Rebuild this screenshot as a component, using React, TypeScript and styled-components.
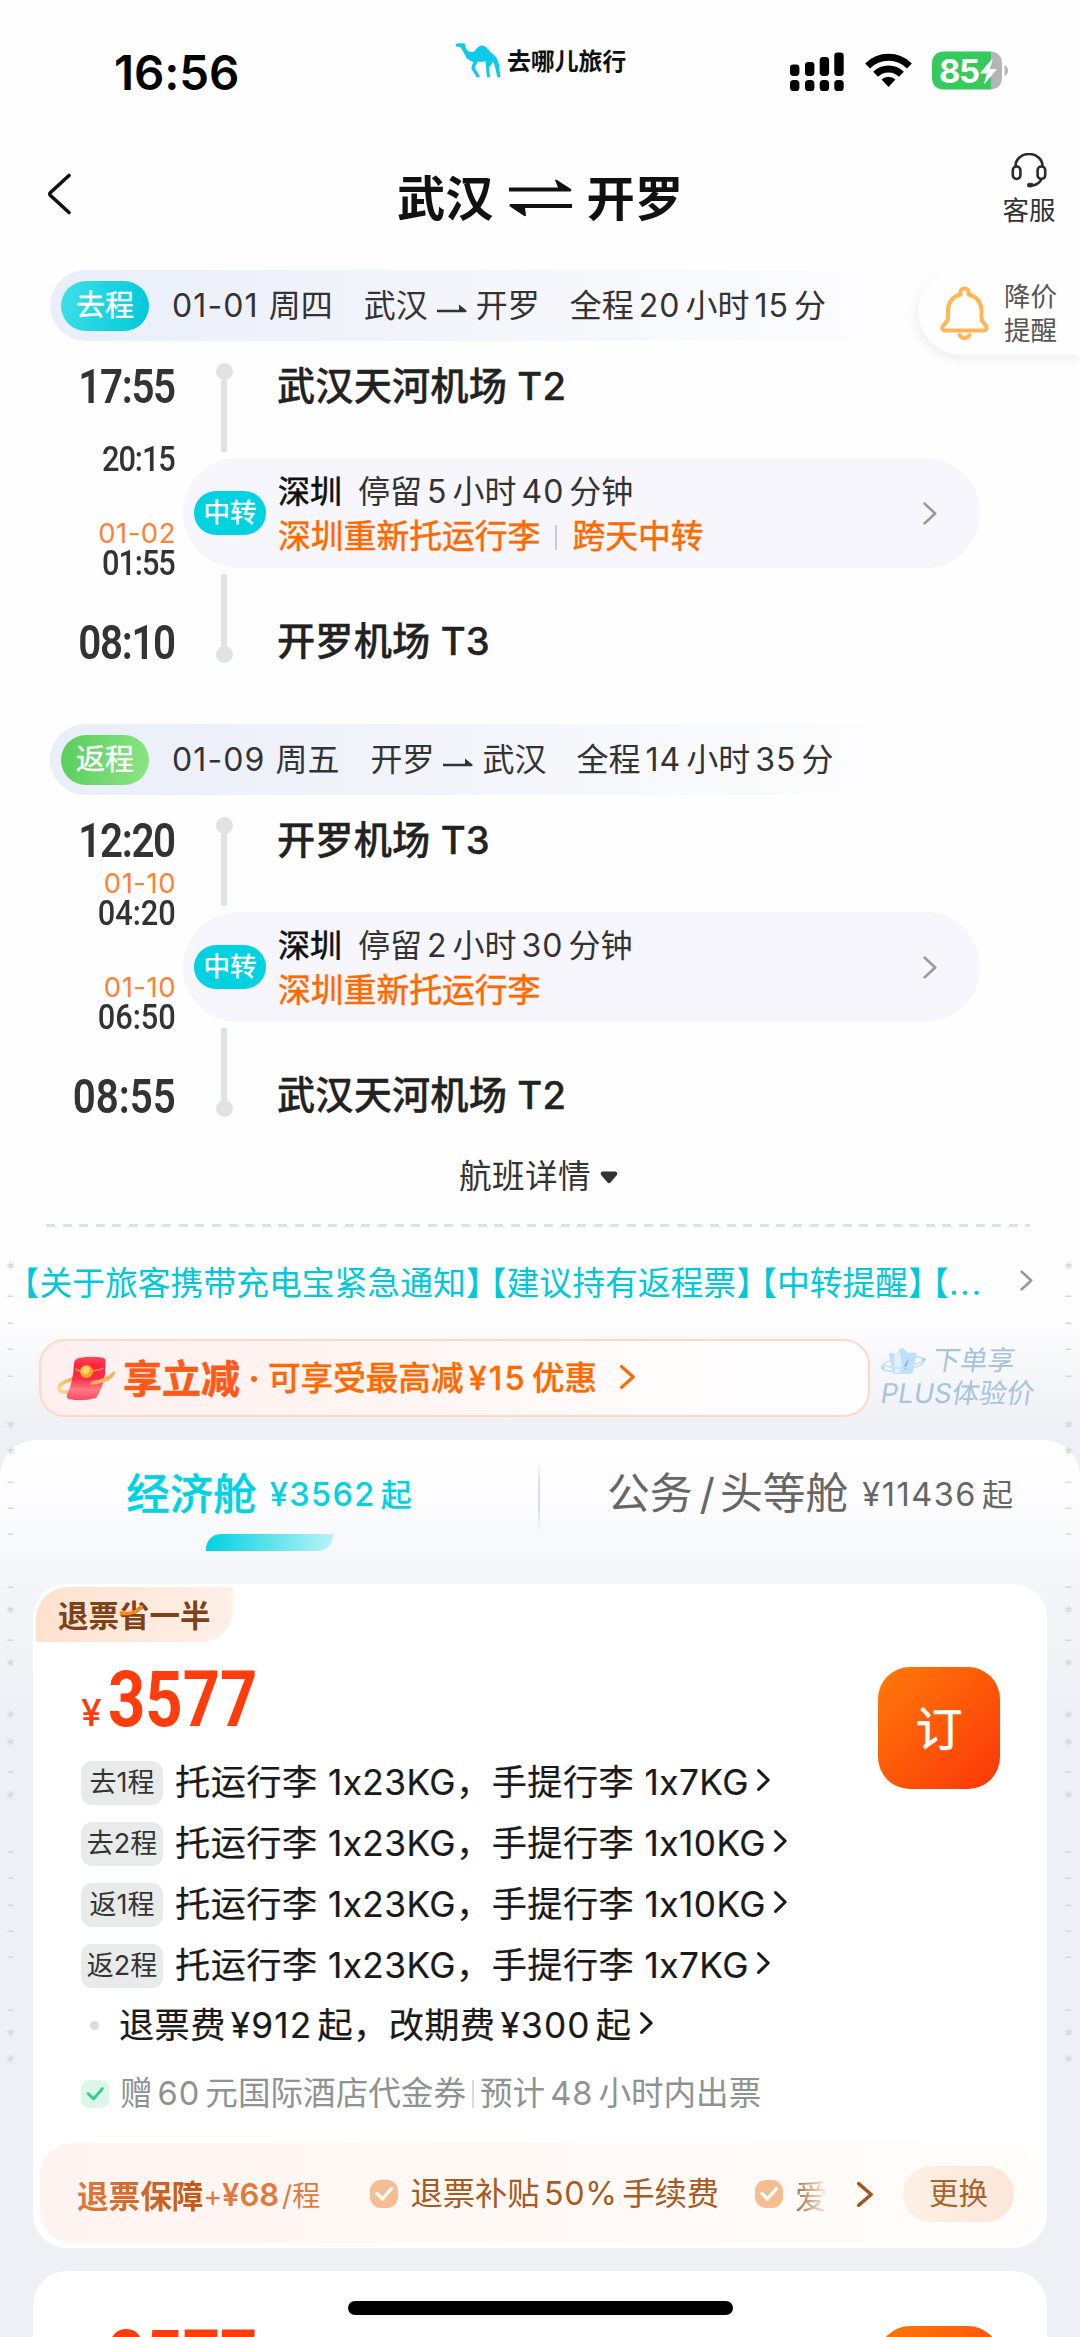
import React from "react";
import styled, { createGlobalStyle, css } from "styled-components";

const Global = createGlobalStyle`
  html, body { margin: 0; padding: 0; background: #eff0f5; }
  *, *::before, *::after { box-sizing: border-box; }
  body { width: 1080px; height: 2337px; overflow: hidden; text-autospace: no-autospace; }
`;

const sans = `Inter, "Noto Sans CJK SC", sans-serif`;
const din = `Roboto, "Noto Sans CJK SC", sans-serif`;

const Screen = styled.div`
  position: relative;
  width: 1080px;
  height: 2337px;
  overflow: hidden;
  font-family: ${sans};
  color: #222;
  white-space: nowrap;
  background: linear-gradient(#fefefe 0, #fefefe 1310px, #eff0f5 1430px, #eff0f5 100%);
`;

interface TextProps {
  $size: number;
  $color?: string;
  $weight?: number;
  $ls?: number;
  $stroke?: number;
  $ml?: number;
}
const Text = styled.span<TextProps>`
  font-size: ${(p) => p.$size}px;
  line-height: 1.2;
  color: ${(p) => p.$color ?? "inherit"};
  font-weight: ${(p) => p.$weight ?? 400};
  letter-spacing: ${(p) => p.$ls ?? 0}px;
  margin-left: ${(p) => p.$ml ?? 0}px;
  ${(p) => p.$stroke && css`-webkit-text-stroke: ${p.$stroke}px currentColor;`}
`;
const Digits = styled.span<{ $gap: number; $ls: number; $size?: number }>`
  margin: 0 ${(p) => p.$gap}px;
  letter-spacing: ${(p) => p.$ls}px;
  ${(p) => p.$size && css`font-size: ${p.$size}px;`}
`;
function Mixed({ text, gap = 5, ls = 1, size }: { text: string; gap?: number; ls?: number; size?: number }) {
  return (
    <>
      {text.split(/([0-9¥%]+)/).map((part, i) =>
        i % 2 ? (
          <Digits key={i} $gap={gap} $ls={ls} $size={size}>
            {part}
          </Digits>
        ) : (
          part
        )
      )}
    </>
  );
}

const Chevron = ({ w, h, color, sw = 2.6 }: { w: number; h: number; color: string; sw?: number }) => (
  <svg width={w} height={h} viewBox={`0 0 ${w} ${h}`} fill="none">
    <path d={`M1.6 1.6 L${w - 1.8} ${h / 2} L1.6 ${h - 1.6}`} stroke={color} strokeWidth={sw} strokeLinecap="round" strokeLinejoin="round" />
  </svg>
);

/* status bar */
const StatusBar = styled.div`
  height: 130px;
  display: grid;
  grid-template-columns: 456px 334px 1fr;
  align-items: start;
`;
const Clock = styled.div`
  padding: 45px 0 0 114px;
  font-size: 47.5px;
  line-height: 56px;
  font-weight: 600;
  color: #000;
  letter-spacing: -0.1px;
`;
const Brand = styled.div`
  padding-top: 43px;
  display: flex;
  height: 80px;
  align-items: flex-start;
  gap: 6px;
  font-size: 24px;
  font-weight: 700;
  line-height: 38px;
  color: #111;
  letter-spacing: -0.2px;
`;
const StatusIcons = styled.div`
  display: flex;
  padding-top: 51px;
  gap: 20px;
`;

/* title bar */
const TitleBar = styled.header`
  height: 140px;
  display: grid;
  grid-template-columns: 397px 1fr 104px;
`;
const Back = styled.div`
  padding: 43px 0 0 46px;
`;
const Route = styled.h1`
  margin: 0;
  height: 129px;
  display: flex;
  align-items: center;
  gap: 15px;
  font-size: 48.3px;
  font-weight: 700;
  color: #111;
  svg { margin-top: 6px; }
`;
const Service = styled.div`
  display: flex;
  flex-direction: column;
  align-items: center;
  padding: 23px 0 0 2px;
  width: 104px;
  gap: 6px;
`;

/* itinerary */
const Leg = styled.section`
  margin-bottom: 38px;
`;
const LegHead = styled.div`
  margin-left: 50px;
  width: 900px;
  height: 71px;
  padding: 2px 0 0 11px;
  border-radius: 36px;
  display: flex;
  align-items: center;
  background: linear-gradient(90deg, #e9eef9 0%, #f4f5fb 45%, #fefefe 100%);
`;
const DirTag = styled.div<{ $back?: boolean }>`
  width: 88px;
  height: 50px;
  border-radius: 25px;
  margin: -2px 23px 0 0;
  display: flex;
  align-items: center;
  justify-content: center;
  font-size: 29px;
  line-height: 48px;
  -webkit-text-stroke: 0.4px #fff;
  color: #fff;
  background: ${(p) =>
    p.$back ? "linear-gradient(100deg, #58cd5a, #8ce586)" : "linear-gradient(100deg, #3fdfe8, #00c8d8)"};
`;
const LegBody = styled.div`
  display: grid;
  grid-template-columns: 176px 797px;
  column-gap: 7px;
`;
const Times = styled.div`
  padding-top: 19px;
  display: flex;
  flex-direction: column;
  align-items: flex-end;
`;
const BigTime = styled.div<{ $ls: number }>`
  height: 54px;
  line-height: 54px;
  font-family: ${din};
  font-size: 48px;
  font-weight: 600;
  letter-spacing: ${(p) => p.$ls * 1.6}px;
  margin-right: ${(p) => p.$ls * -1.3}px;
  color: #333;
  transform: scaleX(0.84);
  transform-origin: right center;
`;
const SmallTimes = styled.div<{ $after: number }>`
  height: ${(p) => (p.$after === 44 ? 61 : 60)}px;
  margin-bottom: ${(p) => p.$after}px;
  display: flex;
  flex-direction: column;
  align-items: flex-end;
  justify-content: flex-end;
`;
const SmallTime = styled.div<{ $ls: number }>`
  height: 30px;
  line-height: 30px;
  font-family: ${din};
  font-size: 35px;
  font-weight: 500;
  letter-spacing: ${(p) => p.$ls * 1.2}px;
  margin-right: ${(p) => p.$ls * -1}px;
  color: #333;
  transform: scaleX(0.88);
  transform-origin: right center;
`;
const NextDate = styled.div`
  height: 30px;
  line-height: 28px;
  font-size: 27.5px;
  letter-spacing: 0.5px;
  color: #ff8235;
`;
const Stops = styled.div`
  display: flex;
  flex-direction: column;
`;
const Stop = styled.div`
  height: 117px;
  display: flex;
  &:last-child { height: 118px; }
`;
const Rail = styled.div<{ $end?: boolean }>`
  width: 82px;
  height: 89px;
  margin-top: ${(p) => (p.$end ? 6 : 22)}px;
  display: flex;
  flex-direction: ${(p) => (p.$end ? "column-reverse" : "column")};
  align-items: center;
  &::before { content: ""; width: 17px; height: 17px; border-radius: 50%; background: #dfe3e3; }
  &::after { content: ""; flex: 1; width: 6px; background: #dfe3e3; }
`;
const Airport = styled.div<{ $end?: boolean }>`
  margin-left: 12px;
  padding-top: ${(p) => (p.$end ? 48 : 20)}px;
  font-size: 38.2px;
  line-height: 50px;
  font-weight: 500;
  letter-spacing: 0.15px;
  color: #222;
  -webkit-text-stroke: 0.35px #222;
`;
const Transfer = styled.div`
  height: 110px;
  border-radius: 55px;
  background: #f6f6fc;
  display: flex;
  align-items: center;
  padding: 0 43px 0 11px;
`;
const TransferTag = styled.div`
  width: 72px;
  height: 44px;
  border-radius: 22px;
  background: #00d2e2;
  color: #fff;
  font-size: 26.5px;
  -webkit-text-stroke: 0.4px #fff;
  line-height: 43px;
  text-align: center;
`;
const TransferInfo = styled.div`
  flex: 1;
  margin-left: 12px;
  padding-top: 3px;
  display: flex;
  flex-direction: column;
`;
const TransferLine = styled.div`
  height: 45px;
  display: flex;
  align-items: center;
`;
const ThinRule = styled.i<{ $h: number; $mx: number; $c?: string }>`
  width: 2px;
  height: ${(p) => p.$h}px;
  margin: 0 ${(p) => p.$mx}px;
  background: ${(p) => p.$c ?? "#c9ccd2"};
`;
const DetailRow = styled.div`
  margin-top: -38px;
  height: 72px;
  display: flex;
  align-items: center;
  justify-content: center;
  gap: 9px;
  padding: 2px 3px 0 0;
`;
const Dashes = styled.div`
  margin: 12px 50px 0 46px;
  height: 3px;
  background: repeating-linear-gradient(90deg, #dfe2e2 0 9px, transparent 9px 16.6px);
`;
const Notice = styled.div`
  height: 110px;
  padding: 0 47px 3px 23px;
  display: flex;
  align-items: center;
  justify-content: space-between;
  color: #00c8d8;
  font-size: 32.8px;
`;
const NoticeItems = styled.div`
  display: flex;
  gap: 8px;
  font-feature-settings: "halt";
  text-spacing-trim: space-all;
`;

/* promotion strip */
const Promo = styled.div`
  height: 78px;
  margin: 2px 0 0 39px;
  display: flex;
`;
const PromoBox = styled.div`
  width: 831px;
  border: 2px solid #ffd8c8;
  border-radius: 26px;
  background: linear-gradient(90deg, #fff0ef 0%, #fff6f4 45%, #fffefe 85%);
  display: flex;
  align-items: center;
  padding: 2px 0 0 16px;
  color: #ff6a00;
`;
const PromoDot = styled.i`
  width: 6px;
  height: 6px;
  border-radius: 50%;
  background: #ff6a00;
  margin: 0 11px 0 11px;
`;
const Plus = styled.div`
  margin-left: 11px;
  display: flex;
  flex-direction: column;
  padding-top: 5px;
  color: #a8c4dc;
  font-size: 27.3px;
  line-height: 34px;
  letter-spacing: 0.1px;
`;
const PlusLine = styled.div`
  display: flex;
  align-items: center;
  height: 33px;
  gap: 6px;
`;
const Slant = styled.span`
  display: block;
  transform: skewX(-9deg);
`;

/* cabin tabs */
const Cabin = styled.main`
  margin-top: 23px;
  border-radius: 36px 36px 0 0;
  padding-top: 1px;
  background: linear-gradient(#fff 0, #fdfdfe 50px, #f4f5f9 150px, #eff0f5 300px);
`;
const Tabs = styled.div`
  height: 143px;
  display: grid;
  grid-template-columns: 538px 2px 540px;
`;
const Tab = styled.div<{ $active?: boolean }>`
  display: flex;
  flex-direction: column;
  align-items: ${(p) => (p.$active ? "center" : "flex-start")};
  padding-left: ${(p) => (p.$active ? 0 : 67)}px;
  color: ${(p) => (p.$active ? "#00d2e2" : "#666")};
`;
const TabLabel = styled.div`
  height: 93px;
  padding-top: 13px;
  display: flex;
  align-items: center;
`;
const TabSplit = styled.div`
  margin-top: 19px;
  height: 74px;
  background: linear-gradient(transparent, #dcdfe2 30%, #dcdfe2 70%, transparent);
`;
const Indicator = styled.div`
  width: 127px;
  height: 17px;
  border-radius: 15px 0 15px 0;
  background: linear-gradient(90deg, #00d2e2, #b9f3f6);
`;

/* fare card */
const Card = styled.article<{ $h: number }>`
  height: ${(p) => p.$h}px;
  margin: 0 33px 23px;
  border-radius: 34px;
  background: #fff;
  padding: 3px 7px 0;
  display: flex;
  flex-direction: column;
  & > * { flex-shrink: 0; }
`;
const Badge = styled.div`
  position: relative;
  margin-left: -4px;
  width: 197px;
  height: 55px;
  border-radius: 32px 0 32px 0;
  background: linear-gradient(90deg, #ffe1ce, #fff0e8);
  padding-left: 22px;
  font-size: 30.5px;
  line-height: 57px;
  font-weight: 700;
  color: #7c4218;
  svg { position: absolute; left: 83px; top: 18px; }
`;
const PriceRow = styled.div<{ $top: number }>`
  margin-top: ${(p) => p.$top}px;
  height: 85px;
  display: flex;
  align-items: flex-start;
  justify-content: space-between;
  padding: 0 40px 0 41px;
`;
const Price = styled.div`
  display: flex;
  align-items: baseline;
  color: #ff3c0c;
  padding-top: 2px;
`;
const PriceSign = styled.span`
  width: 27px;
  font-size: 37px;
  line-height: 44px;
  font-weight: 500;
`;
const PriceValue = styled.span`
  font-family: ${din};
  font-size: 78px;
  line-height: 62px;
  font-weight: 700;
  transform: scaleX(0.835);
  transform-origin: left center;
`;
const Book = styled.button`
  width: 122px;
  height: 122px;
  border: 0;
  border-radius: 32px;
  background: linear-gradient(135deg, #ff7a0a, #fc3608);
  color: #fff;
  font: 400 47px/119px ${sans};
  -webkit-text-stroke: 0.6px #fff;
  padding: 0;
  flex: none;
`;
const Row = styled.div<{ $h?: number }>`
  height: ${(p) => p.$h ?? 61}px;
  display: flex;
  align-items: center;
  padding-left: 41px;
  color: #1a1a1a;
`;
const LegNo = styled.span`
  width: 82px;
  height: 44px;
  margin-right: 12px;
  border-radius: 11px;
  background: #e9ebeb;
  color: #333;
  font-size: 27px;
  line-height: 43px;
  text-align: center;
`;
const Bullet = styled.i`
  width: 9px;
  height: 9px;
  border-radius: 50%;
  background: #dadddd;
  margin: 0 20px 0 9px;
`;
const Guard = styled.div`
  margin-top: 9px;
  height: 100px;
  border-radius: 32px;
  background: linear-gradient(90deg, #fff4f1 0%, #fff9f6 45%, #fffcfa 100%);
  display: flex;
  align-items: center;
  padding: 2px 0 0 37px;
  color: #a85a20;
`;
const GuardName = styled.span`
  font-size: 31.6px;
  font-weight: 700;
  background: linear-gradient(90deg, #e07a3c, #c4561a);
  -webkit-background-clip: text;
  color: transparent;
`;
const GuardPrice = styled.span`
  width: 167px;
  color: #e4783c;
  font-size: 28px;
  b { font-size: 31px; font-weight: 600; margin-right: 3px; }
`;
const Faded = styled.span`
  width: 34px;
  margin-right: 28px;
  font-size: 32.5px;
  background: linear-gradient(90deg, #a85a20 -10%, rgba(168, 90, 32, 0.1) 90%);
  -webkit-background-clip: text;
  color: transparent;
`;
const Swap = styled.div`
  margin-left: 30px;
  width: 111px;
  height: 56px;
  border-radius: 28px;
  background: linear-gradient(90deg, #fdf0e4, #fbe7d8);
  font-size: 29.5px;
  line-height: 55px;
  text-align: center;
  color: #a9642e;
`;

/* floating layers */
const Alert = styled.aside`
  position: absolute;
  right: 0;
  top: 267px;
  width: 162px;
  height: 88px;
  border-radius: 44px 0 0 44px;
  background: #fefefe;
  box-shadow: -2px 5px 10px rgba(0, 0, 0, 0.06);
  display: flex;
  align-items: center;
  padding: 3px 0 0 22px;
  gap: 15px;
  color: #555;
  font-size: 26.5px;
  line-height: 34px;
`;
const HomeBar = styled.div`
  position: absolute;
  left: 348px;
  top: 2301px;
  width: 385px;
  height: 14px;
  border-radius: 7px;
  background: #000;
`;
const Marks = styled.div<{ $right?: boolean }>`
  position: absolute;
  top: 1257px;
  ${(p) => (p.$right ? "right: 3px;" : "left: 2px;")}
  width: 17px;
  display: flex;
  flex-direction: column;
  text-align: center;
  color: #d5d8da;
  font-size: 18px;
`;
const Mark = styled.span`
  height: 26.45px;
  line-height: 26.45px;
`;

const Camel = () => (
  <svg width="45" height="36" viewBox="0 0 45 36" fill="#0ccbea">
    <path d="M0 1 Q1 0 9 0.500 Q8.500 3 11 7 Q13.500 9.500 17 9 Q19 8.500 21 5 Q23.500 2 26.500 2.500 Q30 3 32 6.500 Q34.500 9.500 38 12 Q43 17 43.300 25 L44.500 34 L41.500 34.500 L39 24 Q38 20 36.500 18.500 Q36.500 21 33 24.500 L34 34 L31 34.500 L30 24 L29.500 18 Q26 19.500 22 18.500 L18.500 24.500 L24 33.500 L21 34.500 L15.500 26 Q15 24.500 17.500 19 Q11 17 9.500 13 Q7 8 4.500 4 L0 3.500 Z" />
  </svg>
);
const Signal = () => (
  <svg width="55" height="40" viewBox="0 0 55 40">
    {[0, 15, 29.7, 44.3].map((x, i) => (
      <g key={x}>
        <rect x={x} y={[13.5, 11, 6, 1.5][i]} width="9.4" height={[11.5, 14, 19, 23.5][i]} rx="3.4" />
        <rect x={x} y="29" width="9.4" height="11" rx="3.6" />
      </g>
    ))}
  </svg>
);
const Wifi = () => (
  <svg width="47" height="38" viewBox="0 0 47 38" fill="none" stroke="#000" strokeWidth="7">
    <path d="M2.6 15 A29.6 29.6 0 0 1 44.4 15" />
    <path d="M10.6 23.2 A18.3 18.3 0 0 1 36.4 23.2" />
    <path d="M16.6 28.4 A10 10 0 0 1 30.4 28.4 L23.5 36 Z" fill="#000" stroke="none" />
  </svg>
);
const BatteryWrap = styled.div`
  position: relative;
  width: 77px;
  height: 39px;
  span { position: absolute; left: 7px; top: 1px; color: #fff; font-weight: 700; font-size: 33px; line-height: 38px; letter-spacing: -1.5px; }
  svg { position: absolute; left: 0; top: 0; }
`;
const Battery = () => (
  <BatteryWrap>
    <svg width="77" height="39" viewBox="0 0 77 39">
      <path d="M13 .5 H59 V38.500 H13 Q0 38.500 0 26 V13 Q0 .5 13 .5Z" fill="#36c95c" />
      <path d="M59 .5 Q70 1.500 70 13 V26 Q70 37.500 59 38.500Z" fill="#b5b5b5" />
      <path d="M72.500 14 Q76 16 76 19.500 Q76 23 72.500 25Z" fill="#b5b5b5" />
      <path d="M60 8.500 L48.500 22 H55.500 L52.500 32.500 L64 18.500 H57.500Z" fill="#fff" stroke="#fff" strokeWidth="1" strokeLinejoin="round" />
    </svg>
    <span>85</span>
  </BatteryWrap>
);
const SwapArrows = () => (
  <svg width="63" height="40" viewBox="0 0 63 40" fill="#111">
    <path d="M0 9.500 H49 L46 2 Q46 1 48 2 L62 11 Q63 13.500 61 13.500 H0Z" />
    <path d="M63 30 H16 L17 37.500 Q16.500 39 14.500 37.500 L1 28.500 Q-.5 26 2 26 H63Z" />
  </svg>
);
const LineArrow = () => (
  <svg width="30" height="12" viewBox="0 0 30 12" fill="#333">
    <path d="M0 6.800 H22 V1.500 L29.500 7.500 Q30 9 28.500 9.200 H0Z" />
  </svg>
);
const Headset = () => (
  <svg width="36" height="36" viewBox="0 0 36 36" fill="none" stroke="#2b2b2b" strokeWidth="2.600">
    <path d="M4.500 14 V13 A13.500 12 0 0 1 31.500 13 V14" />
    <rect x="1.800" y="13.500" width="7.600" height="12.500" rx="3.700" />
    <rect x="26.600" y="13.500" width="7.600" height="12.500" rx="3.700" />
    <path d="M30.500 26 Q28 31.500 21.500 32.500" />
    <rect x="16.500" y="30.300" width="5.500" height="3.600" rx="1.400" fill="#2b2b2b" stroke="#2b2b2b" strokeWidth="1" />
  </svg>
);
const Bell = () => (
  <svg width="49" height="54" viewBox="0 0 49 54" fill="none" stroke="#ffb656" strokeWidth="4" strokeLinejoin="round" strokeLinecap="round">
    <path d="M20.500 6.500 Q20.500 2.500 24.500 2.500 Q28.500 2.500 28.500 6.500 V8.500 Q41 12 41.500 24 V31 Q41.500 36 45 38.500 Q49 43.500 44 44.500 H5 Q0 43.500 4 38.500 Q8 36 8 31 V24 Q8.500 12 20.500 8.500Z" />
    <path d="M19.500 49 Q21 52 24.500 52 Q28 52 29.500 49" />
  </svg>
);
const Packet = () => (
  <svg width="60" height="46" viewBox="0 0 60 46" fill="none">
    <defs>
      <linearGradient id="pk" x1="0" y1="0" x2="0" y2="1">
        <stop offset="0" stopColor="#ff4a5a" />
        <stop offset=".2" stopColor="#ff2140" />
        <stop offset=".5" stopColor="#ff2c48" />
        <stop offset=".75" stopColor="#ff7a84" />
        <stop offset="1" stopColor="#f84a60" />
      </linearGradient>
      <linearGradient id="rg" x1="0" y1="1" x2="1" y2="0">
        <stop offset="0" stopColor="#ffd58c" />
        <stop offset="1" stopColor="#f2ad48" />
      </linearGradient>
    </defs>
    <path d="M16 23 Q2 27 2 32 Q2 37 11 36" stroke="url(#rg)" strokeWidth="3.500" strokeLinecap="round" />
    <path d="M22 2 Q33 0 45 1.500 Q49 2 48.500 6 L48 18 Q46 32 39 42 Q24 46 12 43 Q9 42 10 39 Q16 27 17 8 Q17 3 22 2Z" fill="url(#pk)" />
    <path d="M18 13 Q28 19 47 12" stroke="#ff8a50" strokeWidth="1.800" />
    <circle cx="29.500" cy="15.500" r="6.500" fill="#f9a52b" />
    <circle cx="28.500" cy="14" r="4" fill="#ffd666" />
    <path d="M35 26.500 Q50 24 57 16.500 Q55 25 35 27.500Z" fill="#f2b45c" stroke="#f2b45c" strokeWidth="2.400" strokeLinejoin="round" />
  </svg>
);
const Crown = () => (
  <svg width="46" height="30" viewBox="0 0 46 30" fill="none">
    <ellipse cx="22" cy="18" rx="21.500" ry="6.500" transform="rotate(-10 22 18)" stroke="#c3dff2" strokeWidth="1.600" />
    <path d="M8 9 Q8 6 11 7 L15 8 L19 3 Q21 1 23 3 L27 7 L33 6.500 Q36 6.500 35.500 9 L32 26 Q31.500 28 29 28 H14 Q12 28 11.500 26Z" fill="#bfe0f8" />
    <path d="M13 9 L19 6 L21 20 L18 27 H14Z" fill="#dff0fc" />
    <path d="M22 22 L28 12 L25 24Z" fill="#84b8e2" />
    <path d="M2 19 Q22 27 43 14" stroke="#c8e2f5" strokeWidth="1.600" />
    <circle cx="43" cy="13.500" r="1.800" fill="#a8d0ee" />
    <circle cx="2" cy="22" r="1.500" fill="#a8d0ee" />
  </svg>
);
const CheckBox = styled.svg.attrs({ width: 28, height: 28, viewBox: "0 0 28 28" })<{ $ml: number; $mr: number }>`
  flex: none;
  margin: 0 ${(p) => p.$mr}px 0 ${(p) => p.$ml}px;
`;
const Check = ({ bg, fg, ml = 0, mr = 12 }: { bg: string; fg: string; ml?: number; mr?: number }) => (
  <CheckBox $ml={ml} $mr={mr}>
    <rect width="28" height="28" rx={fg === "#fff" ? 11 : 8} fill={bg} />
    <path d="M7 13.500 L12.500 19 L21.500 8.500" stroke={fg} strokeWidth={fg === "#fff" ? 3.4 : 2.8} fill="none" strokeLinecap="round" strokeLinejoin="round" />
  </CheckBox>
);
const Caret = () => (
  <svg width="18" height="13" viewBox="0 0 18 13" fill="#333">
    <path d="M2.500 .5 H15.500 Q18.500 1.500 16.500 4.500 L10.500 11.500 Q9 13 7.500 11.500 L1.500 4.500 Q-.5 1.500 2.500 .5Z" />
  </svg>
);

interface LegData {
  back?: boolean;
  tag: string;
  date: string;
  day: string;
  from: string;
  to: string;
  total: string;
  times: [string, string | null, string, string, string, string];
  start: string;
  end: string;
  stay: string;
  warn: string[];
}
const legs: LegData[] = [
  {
    tag: "去程", date: "01-01", day: "周四", from: "武汉", to: "开罗", total: "全程20小时15分",
    times: ["17:55", null, "20:15", "01-02", "01:55", "08:10"],
    start: "武汉天河机场 T2", end: "开罗机场 T3", stay: "停留5小时40分钟", warn: ["深圳重新托运行李", "跨天中转"],
  },
  {
    back: true, tag: "返程", date: "01-09", day: "周五", from: "开罗", to: "武汉", total: "全程14小时35分",
    times: ["12:20", "01-10", "04:20", "01-10", "06:50", "08:55"],
    start: "开罗机场 T3", end: "武汉天河机场 T2", stay: "停留2小时30分钟", warn: ["深圳重新托运行李"],
  },
];
const LegRoute = styled.span`
  display: flex;
  align-items: center;
  gap: 9px;
  margin: 0 30px 0 31px;
  svg { margin-top: 5px; }
`;

/* a time with a narrow "1" is set tighter */
const tight = (time: string) => (time.includes("1") ? -1 : 0);

function LegView({ leg }: { leg: LegData }) {
  const t = leg.times;
  return (
    <Leg>
      <LegHead>
        <DirTag $back={leg.back}>{leg.tag}</DirTag>
        <Text $size={32} $color="#333" $ls={1.1}>{leg.date}</Text>
        <Text $size={32} $color="#333" $ml={10}>{leg.day}</Text>
        <LegRoute>
          <Text $size={32} $color="#333">{leg.from}</Text>
          <LineArrow />
          <Text $size={32} $color="#333">{leg.to}</Text>
        </LegRoute>
        <Text $size={32} $color="#333"><Mixed text={leg.total} /></Text>
      </LegHead>
      <LegBody>
        <Times>
          <BigTime $ls={tight(t[0])}>{t[0]}</BigTime>
          <SmallTimes $after={44}>
            {t[1] && <NextDate>{t[1]}</NextDate>}
            <SmallTime $ls={tight(t[2])}>{t[2]}</SmallTime>
          </SmallTimes>
          <SmallTimes $after={37}>
            <NextDate>{t[3]}</NextDate>
            <SmallTime $ls={tight(t[4])}>{t[4]}</SmallTime>
          </SmallTimes>
          <BigTime $ls={tight(t[5])}>{t[5]}</BigTime>
        </Times>
        <Stops>
          <Stop>
            <Rail />
            <Airport>{leg.start}</Airport>
          </Stop>
          <Transfer>
            <TransferTag>中转</TransferTag>
            <TransferInfo>
              <TransferLine>
                <Text $size={32} $color="#111" $stroke={0.6}>深圳</Text>
                <Text $size={32} $color="#333" $ml={16}><Mixed text={leg.stay} /></Text>
              </TransferLine>
              <TransferLine>
                {leg.warn.map((w, i) => (
                  <React.Fragment key={w}>
                    {i > 0 && <ThinRule $h={25} $mx={15} />}
                    <Text $size={32.8} $color="#ff6a00" $stroke={0.5}>{w}</Text>
                  </React.Fragment>
                ))}
              </TransferLine>
            </TransferInfo>
            <Chevron w={14} h={23} color="#999" />
          </Transfer>
          <Stop>
            <Rail $end />
            <Airport $end>{leg.end}</Airport>
          </Stop>
        </Stops>
      </LegBody>
    </Leg>
  );
}

const bags = [
  ["去1程", "1x7KG"],
  ["去2程", "1x10KG"],
  ["返1程", "1x10KG"],
  ["返2程", "1x7KG"],
];
const marks = "*---- **--- -*-* **-* ----- -**".split("");

export default function App() {
  return (
    <Screen>
      <Global />
      <StatusBar>
        <Clock>16:56</Clock>
        <Brand><Camel />去哪儿旅行</Brand>
        <StatusIcons><Signal /><Wifi /><Battery /></StatusIcons>
      </StatusBar>
      <TitleBar>
        <Back>
          <svg width="26" height="42" viewBox="0 0 26 42" fill="none">
            <path d="M23 2.500 L4.500 19.500 Q3 21 4.500 22.500 L23 39.500" stroke="#111" strokeWidth="3.600" strokeLinecap="round" />
          </svg>
        </Back>
        <Route>武汉<SwapArrows />开罗</Route>
        <Service>
          <Headset />
          <Text $size={26.5} $color="#333">客服</Text>
        </Service>
      </TitleBar>

      {legs.map((l) => <LegView key={l.tag} leg={l} />)}

      <DetailRow><Text $size={32.6} $ls={0.4} $color="#333">航班详情</Text><Caret /></DetailRow>
      <Dashes />
      <Notice>
        <NoticeItems>
          <span>【关于旅客携带充电宝紧急通知】</span>
          <span>【建议持有返程票】</span>
          <span>【中转提醒】</span>
          <span>【<Text $size={32.8} $ls={2}>...</Text></span>
        </NoticeItems>
        <Chevron w={13} h={21} color="#999" />
      </Notice>

      <Promo>
        <PromoBox>
          <Packet />
          <Text $size={39} $weight={700} $color="#ff5a1a" $ml={6} $stroke={0.6}>享立减</Text>
          <PromoDot />
          <Text $size={32.6} $weight={500} $stroke={0.3}><Mixed text="可享受最高减¥15优惠" ls={2.2} /></Text>
          <Text $size={20} $ml={23}><Chevron w={15} h={24} color="#ff6a00" sw={3.2} /></Text>
        </PromoBox>
        <Plus>
          <PlusLine><Crown /><Slant>下单享</Slant></PlusLine>
          <Slant>PLUS体验价</Slant>
        </Plus>
      </Promo>

      <Cabin>
        <Tabs>
          <Tab $active>
            <TabLabel>
              <Text $size={43.5} $weight={500} $stroke={0.3}>经济舱</Text>
              <Text $size={31} $weight={500} $ml={8}><Mixed text="¥3562起" size={32.5} ls={1.4} /></Text>
            </TabLabel>
            <Indicator />
          </Tab>
          <TabSplit />
          <Tab>
            <TabLabel>
              <Text $size={42.8}>公务</Text>
              <Text $size={42.6} $ml={7}>/</Text>
              <Text $size={42.8} $ml={5}>头等舱</Text>
              <Text $size={31} $ml={9}><Mixed text="¥11436起" size={32.5} ls={1.5} /></Text>
            </TabLabel>
          </Tab>
        </Tabs>

        <Card $h={664}>
          <Badge>
            退票省一半
            <svg width="25" height="12" viewBox="0 0 25 12"><path d="M1 6 Q14 9 23 0 Q25 2 23 4 Q14 12 1 10Z" fill="#ff8a1c" /></svg>
          </Badge>
          <PriceRow $top={25}>
            <Price><PriceSign>¥</PriceSign><PriceValue>3577</PriceValue></Price>
            <Book>订</Book>
          </PriceRow>
          {bags.map(([no, w]) => (
            <Row key={no}>
              <LegNo>{no}</LegNo>
              <Text $size={35.2} $ls={0.45} $stroke={0.2}>托运行李 1x23KG，手提行李 {w}</Text>
              <Text $size={20} $ml={8}><Chevron w={13} h={22} color="#1a1a1a" sw={3} /></Text>
            </Row>
          ))}
          <Row $h={58}>
            <Bullet />
            <Text $size={35.2} $ls={0.4} $stroke={0.2}><Mixed text="退票费¥912起，改期费¥300起" ls={1.2} /></Text>
            <Text $size={20} $ml={9}><Chevron w={13} h={22} color="#1a1a1a" sw={3} /></Text>
          </Row>
          <Row $h={80}>
            <Check bg="#dcf7ea" fg="#2fcf8e" mr={11} />
            <Text $size={32.6} $color="#8e9392"><Mixed text="赠60元国际酒店代金券" /></Text>
            <ThinRule $h={28} $mx={6} $c="#d8dcdc" />
            <Text $size={32.6} $color="#8e9392"><Mixed text="预计48小时内出票" /></Text>
          </Row>
          <Guard>
            <GuardName>退票保障</GuardName>
            <GuardPrice>+<b>¥68</b>/程</GuardPrice>
            <Check bg="#f6bd92" fg="#fff" />
            <Text $size={32.3}><Mixed text="退票补贴50%手续费" ls={0.6} gap={4.5} /></Text>
            <Check bg="#f6bd92" fg="#fff" ml={36} />
            <Faded>爱</Faded>
            <Chevron w={16} h={25} color="#a0561c" sw={3.4} />
            <Swap>更换</Swap>
          </Guard>
        </Card>

        <Card $h={300}>
          <PriceRow $top={52}>
            <Price><PriceSign>¥</PriceSign><PriceValue>3577</PriceValue></Price>
            <Book>订</Book>
          </PriceRow>
        </Card>
      </Cabin>

      <Alert><Bell /><div>降价<br />提醒</div></Alert>
      <Marks>{marks.map((m, i) => <Mark key={i}>{m}</Mark>)}</Marks>
      <Marks $right>{marks.map((m, i) => <Mark key={i}>{m}</Mark>)}</Marks>
      <HomeBar />
    </Screen>
  );
}
